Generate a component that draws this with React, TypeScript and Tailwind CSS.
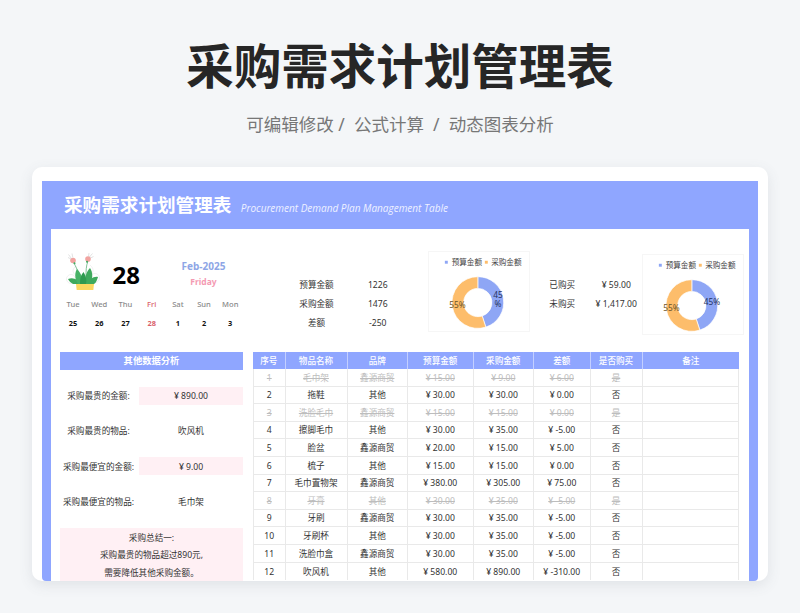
const rows: [string, string, string, string, string, string, string, boolean][] = [
  ["1", "毛巾架", "鑫源商贸", "¥ 15.00", "¥ 9.00", "¥ 6.00", "是", true],
  ["2", "拖鞋", "其他", "¥ 30.00", "¥ 30.00", "¥ 0.00", "否", false],
  ["3", "洗脸毛巾", "鑫源商贸", "¥ 15.00", "¥ 15.00", "¥ 0.00", "是", true],
  ["4", "擦脚毛巾", "其他", "¥ 30.00", "¥ 35.00", "¥ -5.00", "否", false],
  ["5", "脸盆", "鑫源商贸", "¥ 20.00", "¥ 15.00", "¥ 5.00", "否", false],
  ["6", "梳子", "其他", "¥ 15.00", "¥ 15.00", "¥ 0.00", "否", false],
  ["7", "毛巾置物架", "鑫源商贸", "¥ 380.00", "¥ 305.00", "¥ 75.00", "否", false],
  ["8", "牙膏", "其他", "¥ 30.00", "¥ 35.00", "¥ -5.00", "是", true],
  ["9", "牙刷", "鑫源商贸", "¥ 30.00", "¥ 35.00", "¥ -5.00", "否", false],
  ["10", "牙刷杯", "其他", "¥ 30.00", "¥ 35.00", "¥ -5.00", "否", false],
  ["11", "洗脸巾盒", "鑫源商贸", "¥ 30.00", "¥ 35.00", "¥ -5.00", "否", false],
  ["12", "吹风机", "其他", "¥ 580.00", "¥ 890.00", "¥ -310.00", "否", false],
];
const heads = ["序号", "物品名称", "品牌", "预算金额", "采购金额", "差额", "是否购买", "备注"];
const cols = "grid grid-cols-[32.5px_62px_60.5px_65.5px_60.5px_56.5px_52px_96.5px]";

function arc(cx: number, cy: number, R: number, r: number, a0: number, a1: number) {
  const p = (rad: number, a: number) => {
    const t = (a * Math.PI) / 180;
    return `${(cx + rad * Math.sin(t)).toFixed(2)} ${(cy - rad * Math.cos(t)).toFixed(2)}`;
  };
  const large = a1 - a0 > 180 ? 1 : 0;
  return `M${p(R, a0)}A${R} ${R} 0 ${large} 1 ${p(R, a1)}L${p(r, a1)}A${r} ${r} 0 ${large} 0 ${p(r, a0)}Z`;
}

function Donut({ split }: { split: boolean }) {
  const cx = 49.8;
  const cy = 51.8;
  return (
    <svg width="102" height="81" viewBox="0 0 102 81" className="block border border-[#f6f6f6] bg-white">
      <rect x="16" y="9" width="3" height="3" fill="#8ea6f5" />
      <text x="23" y="13.6" fontSize="7.8" fill="#444">预算金额</text>
      <rect x="57" y="9" width="3" height="3" fill="#fdbd6b" />
      <text x="63.5" y="13.6" fontSize="7.8" fill="#444">采购金额</text>
      <path d={arc(cx, cy, 26.5, 14.5, 0, 162)} fill="#8ea6f5" stroke="#fff" strokeWidth="0.7" />
      <path d={arc(cx, cy, 26.5, 14.5, 162, 360)} fill="#fdbd6b" stroke="#fff" strokeWidth="0.7" />
      <text x="29" y="57" fontSize="8.5" textAnchor="middle" fill="#6b5428">55%</text>
      {split ? (
        <>
          <text x="70.5" y="47.5" fontSize="8.5" textAnchor="middle" fill="#26345f">45</text>
          <text x="70.5" y="56.5" fontSize="8.5" textAnchor="middle" fill="#26345f">%</text>
        </>
      ) : (
        <text x="70.5" y="51.5" fontSize="8.5" textAnchor="middle" fill="#26345f">45%</text>
      )}
    </svg>
  );
}

function Plant() {
  return (
    <svg width="36" height="40" viewBox="0 0 36 40" className="block">
      <g fill="none" stroke="#e2e2e2" strokeWidth="0.5">
        <circle cx="6" cy="27" r="4.5" />
        <circle cx="30" cy="26" r="4.5" />
        <path d="M11 14 C6 18 8 22 12 24" />
        <path d="M25 13 C30 17 28 22 25 24" />
      </g>
      <path d="M8.5 10 C11 15 13 19 15 25" fill="none" stroke="#4aa86a" strokeWidth="0.7" />
      <path d="M23 9 C21 14 21 19 21 25" fill="none" stroke="#4aa86a" strokeWidth="0.7" />
      <path d="M11 32 L29 32 L28.3 38 L11.7 38 Z" fill="#fbd85f" />
      <path d="M3 27 C8 25 13 27 16 32 L8 32 C6 31 4 29 3 27 Z" fill="#3fa95d" />
      <path d="M33 25 C29 24 24 27 22 32 L29 32 C31 31 32 28 33 25 Z" fill="#3fa95d" />
      <path d="M13 32 C9 26 10 20 12 17 C16 21 18 26 17 32 Z" fill="#46b266" />
      <path d="M21 32 C19 25 22 19 25 16 C28 20 28 27 25 32 Z" fill="#3fa95d" />
      <path d="M15 32 C15 26 16 23 18.5 20 C21 24 22 28 21 32 Z" fill="#2f9a50" />
      <circle cx="8" cy="8.5" r="2.8" fill="#f2a3a0" />
      <circle cx="23" cy="7" r="2.8" fill="#f2a3a0" />
      <circle cx="9.5" cy="11.2" r="1" fill="#3fa95d" />
      <circle cx="22" cy="9.8" r="1" fill="#3fa95d" />
      <g stroke="#c4c4c4" strokeWidth="0.5">
        <path d="M3.5 2.5 L6.5 6.5" />
        <path d="M7 1.5 L7.8 5.5" />
        <path d="M3 5.5 L6 7" />
        <path d="M27.5 1.5 L24.5 5" />
        <path d="M24 1 L23.5 4.5" />
        <path d="M28.5 4.5 L25.5 6" />
      </g>
    </svg>
  );
}

const week = ["Tue", "Wed", "Thu", "Fri", "Sat", "Sun", "Mon"];
const days = ["25", "26", "27", "28", "1", "2", "3"];

function Calendar() {
  return (
    <div className="w-[183px] shrink-0 pt-[23px]">
      <div className="flex h-[43px] items-start">
        <div className="ml-[5px] w-[36px]"><Plant /></div>
        <div className="ml-[11.5px] mt-[8px] w-[32px] text-[24px] font-bold leading-[30px] text-black">28</div>
        <div className="ml-[24px] flex w-[70px] flex-col items-center pt-[7px]">
          <span className="text-[10px] font-bold leading-[14px] text-[#8ea6e6]">Feb-2025</span>
          <span className="mt-[2px] text-[8.5px] font-bold leading-[14px] text-[#f49ab2]">Friday</span>
        </div>
      </div>
      <div className="mt-[0.5px] grid h-[19px] grid-cols-[repeat(7,26.2px)] items-center text-center text-[7.6px] font-medium">
        {week.map((d) => (
          <span key={d} className={d === "Fri" ? "text-[#d9616a]" : "text-[#8a8a8a]"}>{d}</span>
        ))}
      </div>
      <div className="grid h-[19px] grid-cols-[repeat(7,26.2px)] items-center text-center text-[7.4px] font-bold">
        {days.map((d) => (
          <span key={d} className={d === "28" ? "text-[#d9616a]" : "text-[#111]"}>{d}</span>
        ))}
      </div>
    </div>
  );
}

function Cell({ children, cls = "" }: { children?: React.ReactNode; cls?: string }) {
  return <div className={`flex items-center justify-center pt-[1.5px] ${cls}`}>{children}</div>;
}

function LeftRow({ label, value, pink }: { label: string; value: string; pink?: boolean }) {
  return (
    <div className="mb-[17.6px] grid h-[17.6px] grid-cols-[79px_104px] items-stretch">
      <Cell cls="whitespace-nowrap pr-[2px]">{label}</Cell>
      <Cell cls={pink ? "bg-[#fff0f4]" : ""}>{value}</Cell>
    </div>
  );
}

export default function App() {
  return (
    <div
      className="flex h-[613px] w-[800px] flex-col items-center overflow-hidden bg-[#f4f6f8] text-[#333]"
      style={{ fontFamily: '"Noto Sans", "Noto Sans CJK SC", sans-serif' }}
    >
      <h1 className="mt-[36px] h-[60px] text-[47.5px] font-bold leading-[60px] text-[#262626]">采购需求计划管理表</h1>
      <p className="mt-[16px] h-[24px] whitespace-pre text-[17.5px] leading-[24px] text-[#777]">可编辑修改 /  公式计算  /  动态图表分析</p>

      <div className="mt-[31px] w-[736px] flex-none overflow-hidden rounded-[10px] bg-white px-[10px] pt-[14px] shadow-[0_4px_14px_rgba(80,90,110,0.12)]">
        <div className="h-[400px] rounded-b-[4px] bg-[#8fa6ff] px-[9px]">
          <div className="flex h-[48px] items-center pl-[13px]">
            <span className="text-[18.6px] font-bold leading-none text-white">采购需求计划管理表</span>
            <span className="ml-[9.5px] mt-[6px] text-[10px] italic leading-none text-[#eef1ff]" style={{ fontFamily: '"Open Sans", sans-serif' }}>Procurement Demand Plan Management Table</span>
          </div>
          <div className="h-[352px] overflow-hidden bg-white pl-[9px] text-[8.6px]">
            <div className="flex h-[122.5px] items-start">
              <Calendar />
              <div className="ml-[42.5px] mt-[47px] grid w-[122.5px] grid-cols-[62px_60.5px] auto-rows-[19px] items-center text-center">
                <span>预算金额</span><span>1226</span>
                <span>采购金额</span><span>1476</span>
                <span>差额</span><span>-250</span>
              </div>
              <div className="ml-[20px] mt-[22px]"><Donut split /></div>
              <div className="ml-[4px] mt-[47px] grid w-[108px] grid-cols-[56.5px_51.5px] auto-rows-[19px] items-center text-center">
                <span>已购买</span><span>¥ 59.00</span>
                <span>未购买</span><span className="whitespace-nowrap">¥ 1,417.00</span>
              </div>
              <div className="mt-[25px]"><Donut split={false} /></div>
            </div>

            <div className="flex items-start">
              <div className="w-[183px] shrink-0">
                <div className="mb-[17.6px] flex h-[18px] items-center justify-center bg-[#8fa6ff] text-[9.3px] font-semibold text-white">其他数据分析</div>
                <LeftRow label="采购最贵的金额:" value="¥ 890.00" pink />
                <LeftRow label="采购最贵的物品:" value="吹风机" />
                <LeftRow label="采购最便宜的金额:" value="¥ 9.00" pink />
                <LeftRow label="采购最便宜的物品:" value="毛巾架" />
                <div className="flex flex-col items-center bg-[#fff0f4] pt-[2px] leading-[17.6px]">
                  <span>采购总结一:</span>
                  <span>采购最贵的物品超过890元,</span>
                  <span>需要降低其他采购金额。</span>
                  <span className="h-[20px]" />
                </div>
              </div>

              <div className="ml-[10px] w-[486px]">
                <div className={`${cols} h-[17.5px] bg-[#8fa6ff] font-medium text-white`}>
                  {heads.map((h) => (
                    <Cell key={h} cls="border-r border-[#c3cfff] last:border-r-0">{h}</Cell>
                  ))}
                </div>
                {rows.map((r) => (
                  <div key={r[0]} className={`${cols} h-[17.6px] border-b border-[#e9e9e9] last:border-b-0`}>
                    {r.slice(0, 7).map((c, i) => (
                      <Cell
                        key={i}
                        cls={`whitespace-nowrap border-r border-[#e9e9e9] ${i === 0 ? "border-l" : ""} ${r[7] ? "text-[#bdbdbd] line-through" : ""}`}
                      >
                        {c as string}
                      </Cell>
                    ))}
                    <Cell cls="border-r border-[#e9e9e9]" />
                  </div>
                ))}
              </div>
            </div>
          </div>
        </div>
      </div>
    </div>
  );
}
